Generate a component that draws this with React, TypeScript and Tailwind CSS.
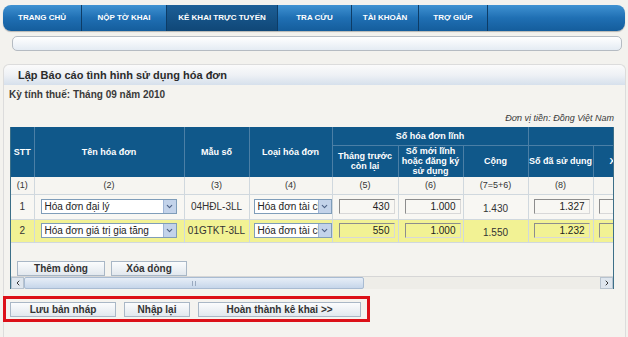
import { ChevronDown, ChevronLeft, ChevronRight } from 'lucide-react';

const tabs = ['TRANG CHỦ', 'NỘP TỜ KHAI', 'KÊ KHAI TRỰC TUYẾN', 'TRA CỨU', 'TÀI KHOẢN', 'TRỢ GIÚP'];
const tabWidths = ['w-[79px]', 'w-[85px]', 'w-[111px]', 'w-[74px]', 'w-[67px]', 'w-[69px]'];

const rows = [
    { stt: '1', ten: 'Hóa đơn đại lý', mau: '04HĐL-3LL', loai: 'Hóa đơn tài ch', truoc: '430', moi: '1.000', cong: '1.430', daSd: '1.327', yellow: false },
    { stt: '2', ten: 'Hóa đơn giá trị gia tăng', mau: '01GTKT-3LL', loai: 'Hóa đơn tài ch', truoc: '550', moi: '1.000', cong: '1.550', daSd: '1.232', yellow: true },
];

function Select({ value, width }: { value: string; width: string }) {
    return (
        <div className={`${width} h-[15px] flex items-center border border-[#7f9db9] bg-white text-left`}>
            <span className="flex-1 pl-[3px] text-[10px] leading-[13px] text-[#222] whitespace-nowrap overflow-hidden">{value}</span>
            <span className="w-[13px] h-[13px] flex items-center justify-center bg-[#c3d3ea] border-l border-[#9fb5d6]">
                <ChevronDown className="w-[9px] h-[9px] text-[#4d6185]" strokeWidth={3} />
            </span>
        </div>
    );
}

function NumInput({ value, width = 'w-[56px]' }: { value: string; width?: string }) {
    return (
        <div className={`${width} h-[15px] border border-[#8d8d8d] border-r-[#d8d8d8] border-b-[#d8d8d8] text-right pr-[4px] text-[10px] leading-[13px] text-[#222]`}>
            {value}
        </div>
    );
}

export default function App() {
    const th = 'border-r border-[#4b7fa6] text-white font-bold text-[9px] leading-[10px] text-center align-middle p-0';
    const td = 'border-r border-b border-[#d0d8de] text-center align-middle p-0';
    const btn = 'h-[15px] border border-[#a9b7c6] bg-gradient-to-b from-[#fbfcfd] to-[#e2e8ee] text-[10px] leading-[13px] font-bold text-[#333]';

    return (
        <div className="w-[628px] h-[337px] overflow-hidden bg-[#f3f2ee] pt-[5px]" style={{ fontFamily: '"Liberation Sans", Arial, sans-serif' }}>
            {/* Top navigation */}
            <div className="mx-[3px] h-[26px] rounded-[8px] bg-gradient-to-b from-[#3f92d2] via-[#1f6fb3] to-[#145d9c] flex overflow-hidden shadow-[0_1px_1px_rgba(0,0,0,0.25)]">
                {tabs.map((t, i) => (
                    <div
                        key={t}
                        className={`${tabWidths[i]} h-full flex items-center justify-center border-r border-[#0d3c66] text-[8px] font-bold text-white ${i === 2 ? 'bg-gradient-to-b from-[#1c5f97] to-[#0f4777]' : ''}`}
                    >
                        {t}
                    </div>
                ))}
                <div className="flex-1" />
            </div>

            {/* Search bar */}
            <div className="ml-[12px] mr-[6px] mt-[5px] h-[15px] rounded-[5px] border border-[#b5bbc2] bg-gradient-to-b from-white to-[#e4ebf3]" />

            {/* Panel */}
            <div className="ml-[3px] mr-[2px] mt-[13px] h-[300px] rounded-t-[6px] border border-[#dcdcdc] border-b-0 bg-[#f4f3ef]">
                <div className="h-[20px] rounded-t-[6px] bg-gradient-to-b from-[#fbfbfb] via-[#eef1f5] to-[#d6e0ec] pl-[14px] pt-[1px] flex items-center text-[11px] text-[#2b2b2b] font-bold">
                    Lập Báo cáo tình hình sử dụng hóa đơn
                </div>

                <div className="pl-[5px] pt-[3px] text-[10px] leading-[14px] font-bold text-[#3a3a3a]">Kỳ tính thuế: Tháng 09 năm 2010</div>
                <div className="pr-[11px] mt-[10px] text-right text-[9px] leading-[12px] italic text-[#3a3a3a]">Đơn vị tiền: Đồng Việt Nam</div>

                {/* Table scroll area */}
                <div className="ml-[6px] mt-[3px] w-[604px] h-[162px] border-x border-[#3c6f88] flex flex-col">
                    <div className="flex-1 overflow-hidden">
                        <table className="table-fixed border-collapse w-[648px]">
                            <colgroup>
                                <col className="w-[23px]" />
                                <col className="w-[150px]" />
                                <col className="w-[65px]" />
                                <col className="w-[83px]" />
                                <col className="w-[66px]" />
                                <col className="w-[65px]" />
                                <col className="w-[65px]" />
                                <col className="w-[65px]" />
                                <col className="w-[66px]" />
                            </colgroup>
                            <thead className="bg-[#10588a]">
                                <tr className="h-[18px]">
                                    <th rowSpan={2} className={th}>STT</th>
                                    <th rowSpan={2} className={th}>Tên hóa đơn</th>
                                    <th rowSpan={2} className={th}>Mẫu số</th>
                                    <th rowSpan={2} className={th}>Loại hóa đơn</th>
                                    <th colSpan={3} className={`${th} border-b`}>Số hóa đơn lĩnh</th>
                                    <th colSpan={2} className={`${th} border-b`}></th>
                                </tr>
                                <tr className="h-[32px]">
                                    <th className={th}>Tháng trước<br />còn lại</th>
                                    <th className={th}>Số mới lĩnh<br />hoặc đăng ký<br />sử dụng</th>
                                    <th className={th}>Cộng</th>
                                    <th className={th}>Số đã sử dụng</th>
                                    <th className={`${th} text-left pl-[16px]`}>X</th>
                                </tr>
                            </thead>
                            <tbody className="text-[9px] text-[#333]">
                                <tr className="h-[17px] bg-[#f6f5f1]">
                                    {['(1)', '(2)', '(3)', '(4)', '(5)', '(6)', '(7=5+6)', '(8)', ''].map((c, i) => (
                                        <td key={i} className={td}>{c}</td>
                                    ))}
                                </tr>
                                {rows.map((r) => (
                                    <tr key={r.stt} className={`${r.yellow ? 'h-[23px] bg-[#f2f294]' : 'h-[25px] bg-[#f8f7f3]'}`}>
                                        <td className={`${td} text-[10px]`}>{r.stt}</td>
                                        <td className={`${td} pl-[6px]`}>
                                            <Select value={r.ten} width="w-[136px]" />
                                        </td>
                                        <td className={`${td} text-[10px]`}>{r.mau}</td>
                                        <td className={`${td} pl-[4px]`}>
                                            <Select value={r.loai} width="w-[78px]" />
                                        </td>
                                        <td className={`${td} pl-[6px]`}><NumInput value={r.truoc} /></td>
                                        <td className={`${td} pl-[6px]`}><NumInput value={r.moi} /></td>
                                        <td className={`${td} text-[10px] pt-[4px]`}>{r.cong}</td>
                                        <td className={`${td} pl-[5px]`}><NumInput value={r.daSd} /></td>
                                        <td className={`${td} pl-[5px]`}><NumInput value="" width="w-[40px]" /></td>
                                    </tr>
                                ))}
                            </tbody>
                        </table>

                        <div className="flex gap-[6px] pl-[6px] mt-[18px]">
                            <button className={`${btn} w-[88px]`}>Thêm dòng</button>
                            <button className={`${btn} w-[76px]`}>Xóa dòng</button>
                        </div>
                    </div>

                    {/* Horizontal scrollbar */}
                    <div className="h-[13px] flex bg-[#eeede8] border-t border-[#d6d6d6]">
                        <div className="w-[13px] flex items-center justify-center bg-[#dfe6ee] border border-[#b7c3cf]">
                            <ChevronLeft className="w-[8px] h-[8px] text-[#333]" strokeWidth={3} />
                        </div>
                        <div className="w-[340px] bg-gradient-to-b from-[#e7eef7] to-[#c6d6ea] border border-[#a8bbd2] rounded-[2px] flex items-center justify-center">
                            <span className="w-[4px] h-[5px] border-x border-[#9aaac0]" />
                        </div>
                        <div className="flex-1" />
                        <div className="w-[13px] flex items-center justify-center bg-[#dfe6ee] border border-[#b7c3cf]">
                            <ChevronRight className="w-[8px] h-[8px] text-[#333]" strokeWidth={3} />
                        </div>
                    </div>
                </div>

                {/* Action buttons */}
                <div className="w-[367px] h-[26px] mt-[7px] -ml-[1px] border-[3px] border-[#dc1018] flex items-center gap-[8px] pl-[4px]">
                    <button className={`${btn} w-[106px]`}>Lưu bản nháp</button>
                    <button className={`${btn} w-[66px]`}>Nhập lại</button>
                    <button className={`${btn} w-[163px]`}>Hoàn thành kê khai &gt;&gt;</button>
                </div>
            </div>
        </div>
    );
}
